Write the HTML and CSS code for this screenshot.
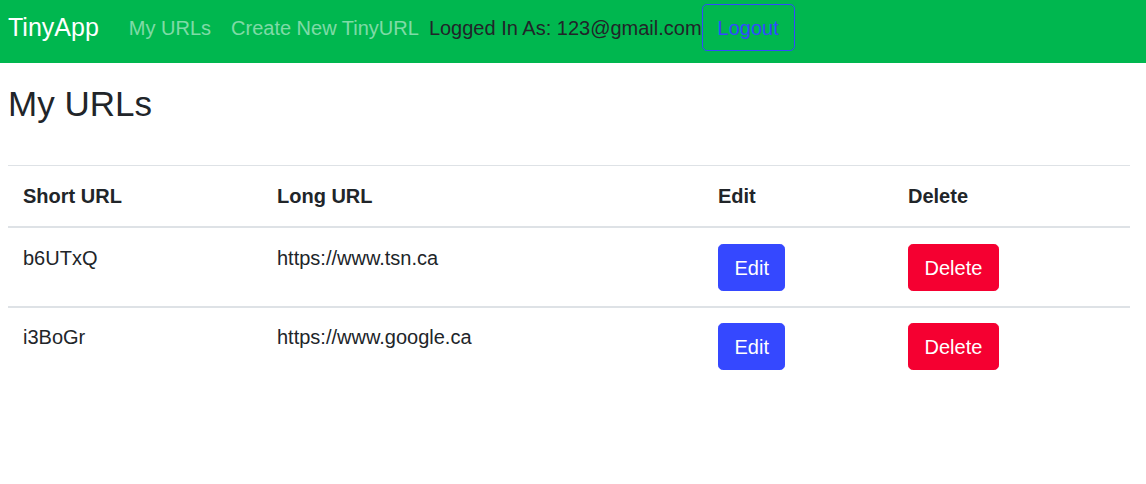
FILE: index.html
```html
<!DOCTYPE html>
<html lang="en">
<head>
<meta charset="utf-8">
<title>TinyApp</title>
<link rel="stylesheet" href="styles.css">
</head>
<body>
<nav class="navbar">
  <div class="nav-row">
    <a class="brand" href="#">TinyApp</a>
    <a class="nav-link" href="#">My URLs</a>
    <a class="nav-link" href="#">Create New TinyURL</a>
    <span class="logged">Logged In As: 123@gmail.com</span>
    <button class="btn btn-outline">Logout</button>
  </div>
</nav>
<main class="content">
  <h1 class="title">My URLs</h1>
  <table class="url-table">
    <colgroup>
      <col class="c1"><col class="c2"><col class="c3"><col class="c4">
    </colgroup>
    <thead>
      <tr><th>Short URL</th><th>Long URL</th><th>Edit</th><th>Delete</th></tr>
    </thead>
    <tbody>
      <tr>
        <td>b6UTxQ</td><td>https://www.tsn.ca</td>
        <td><button class="btn btn-edit">Edit</button></td>
        <td><button class="btn btn-delete">Delete</button></td>
      </tr>
      <tr>
        <td>i3BoGr</td><td>https://www.google.ca</td>
        <td><button class="btn btn-edit">Edit</button></td>
        <td><button class="btn btn-delete">Delete</button></td>
      </tr>
    </tbody>
  </table>
</main>
</body>
</html>
```
FILE: styles.css
```css
* { box-sizing: border-box; }
html, body { margin: 0; padding: 0; }
body {
  font-family: "Liberation Sans", Arial, sans-serif;
  font-size: 20px;
  line-height: 1.5;
  color: #212529;
  background: #fff;
}
.navbar {
  background: #00b74f;
  height: 63px;
  padding: 4px 8px 12px 8px;
}
.nav-row {
  display: flex;
  align-items: center;
  height: 47px;
}
.brand {
  color: #fff;
  font-size: 25px;
  text-decoration: none;
  margin-right: 20px;
  line-height: 1.5;
}
.nav-link {
  color: rgba(255, 255, 255, 0.5);
  text-decoration: none;
  padding: 0 10px;
  font-size: 20px;
}
.logged {
  color: #212529;
  font-size: 20px;
}
.btn {
  font-family: inherit;
  font-size: 20px;
  line-height: 30px;
  padding: 7.5px 15.5px;
  border: 1px solid transparent;
  border-radius: 4.8px;
  cursor: pointer;
}
.btn-outline {
  background: transparent;
  color: #3348ff;
  border-color: #3348ff;
  padding: 7.5px 15px;
}
.btn-edit {
  background: #3548ff;
  color: #fff;
  border-color: #3548ff;
}
.btn-delete {
  background: #f50031;
  color: #fff;
  border-color: #f50031;
}
.content {
  padding: 0 16px 0 8px;
}
.title {
  font-size: 35px;
  font-weight: 400;
  line-height: 1.2;
  margin: 20px 0 40px 0;
}
.url-table {
  width: 100%;
  border-collapse: collapse;
  table-layout: fixed;
}
.c1 { width: 254px; }
.c2 { width: 441px; }
.c3 { width: 190px; }
.c4 { width: 237px; }
.url-table th,
.url-table td {
  text-align: left;
  vertical-align: top;
  padding: 15px;
  border-top: 1px solid #dee2e6;
}
.url-table th {
  font-weight: 700;
  border-bottom: 2px solid #dee2e6;
}
.url-table td .btn {
  margin-top: 1px;
  display: block;
}
.url-table tbody tr + tr td {
  border-top: 2px solid #dee2e6;
  padding-top: 14px;
}
```
